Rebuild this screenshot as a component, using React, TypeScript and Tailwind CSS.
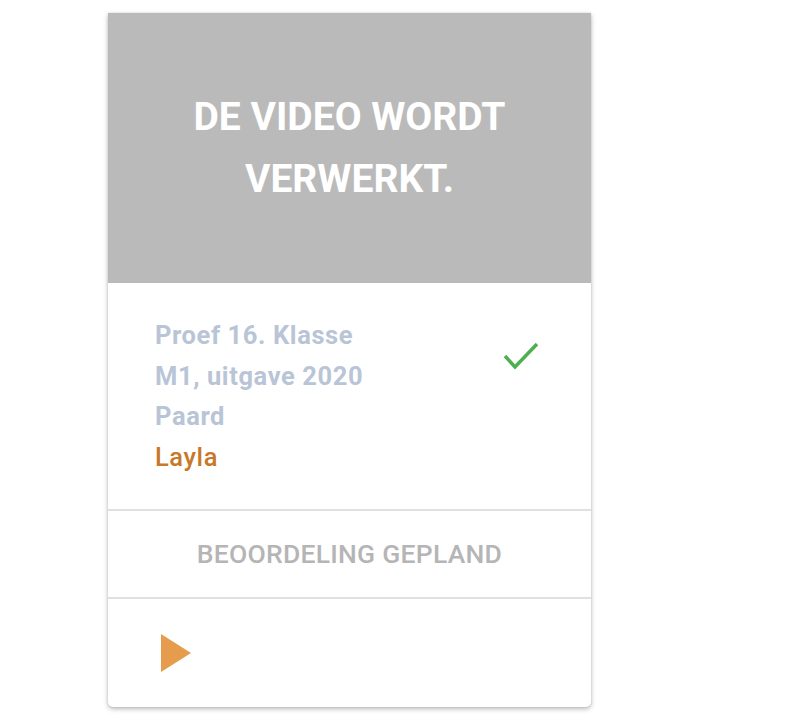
export default function App() {
  return (
    <div className="min-h-screen bg-white pt-[13px] pl-[108px]" style={{ fontFamily: "Roboto, 'Liberation Sans', sans-serif" }}>
      <div className="w-[483px] overflow-hidden rounded-b-[5px] bg-white shadow-[0_2px_5px_rgba(0,0,0,0.28),0_0_2px_rgba(0,0,0,0.12)]">
        {/* processing placeholder */}
        <div className="flex h-[270px] items-center justify-center bg-[#bababa]">
          <p className="text-center text-[39px] font-bold uppercase leading-[62px] text-white">
            De video wordt
            <br />
            verwerkt.
          </p>
        </div>

        {/* details */}
        <div className="flex items-start justify-between border-b-2 border-[#e0e0e0] py-[32px] pl-[47px] pr-[52px]">
          <div className="text-[25.5px] leading-[40.5px] tracking-[0.6px]">
            <div className="font-bold text-[#b9c5d6]">Proef 16. Klasse</div>
            <div className="font-bold text-[#b9c5d6]">M1, uitgave 2020</div>
            <div className="font-bold text-[#b9c5d6]">Paard</div>
            <div className="font-medium text-[#c8782a]">Layla</div>
          </div>
          <svg width="36" height="28" viewBox="0 0 36 28" className="mt-[27px]" fill="none">
            <polyline points="2,14 12,25 34,2" stroke="#4caf50" strokeWidth="3.5" />
          </svg>
        </div>

        <div className="flex h-[88px] items-center justify-center border-b-2 border-[#e0e0e0]">
          <span className="text-[26.5px] font-medium uppercase tracking-[0.25px] text-[#b5b5b5]">Beoordeling gepland</span>
        </div>

        <div className="flex h-[108px] items-center pl-[53px]">
          <svg width="30" height="38" viewBox="0 0 30 38">
            <polygon points="0,0 30,19 0,38" fill="#e59c4c" />
          </svg>
        </div>
      </div>
    </div>
  );
}
